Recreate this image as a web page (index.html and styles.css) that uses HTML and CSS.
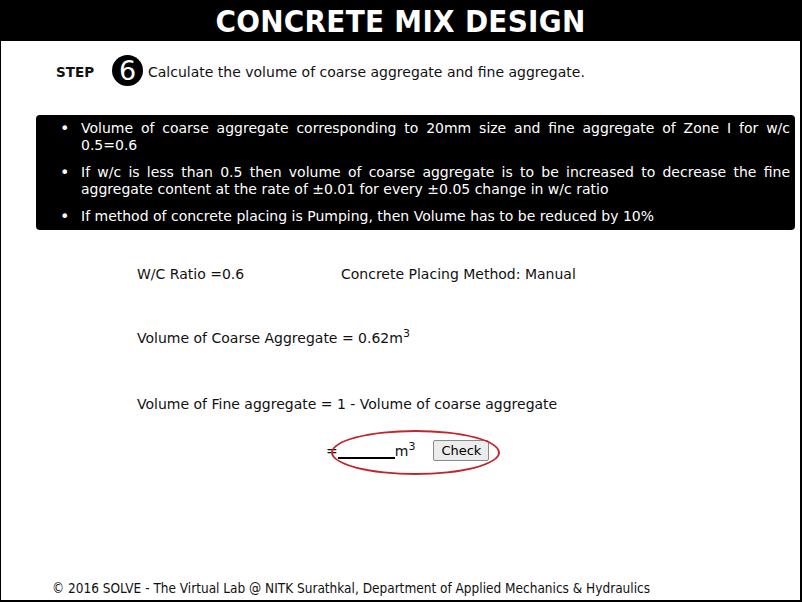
FILE: index.html
```html
<!DOCTYPE html>
<html>
<head>
<meta charset="utf-8">
<link rel="stylesheet" href="styles.css">
</head>
<body>
<div class="page">
  <header class="title">CONCRETE MIX DESIGN</header>
  <div class="step">
    <span class="step-label">STEP</span>
    <span class="step-num">6</span>
    <span class="step-text">Calculate the volume of coarse aggregate and fine aggregate.</span>
  </div>
  <div class="notes">
    <ul>
      <li>Volume of coarse aggregate corresponding to 20mm size and fine aggregate of Zone I for w/c 0.5=0.6</li>
      <li>If w/c is less than 0.5 then volume of coarse aggregate is to be increased to decrease the fine aggregate content at the rate of ±0.01 for every ±0.05 change in w/c ratio</li>
      <li>If method of concrete placing is Pumping, then Volume has to be reduced by 10%</li>
    </ul>
  </div>
  <div class="calc">
    <div class="row-ratio">
      <span class="ratio">W/C Ratio =0.6</span>
      <span>Concrete Placing Method: Manual</span>
    </div>
    <div class="coarse">Volume of Coarse Aggregate = 0.62m<sup>3</sup></div>
    <div class="fine">Volume of Fine aggregate = 1 - Volume of coarse aggregate</div>
    <div class="answer">
      <span class="eq">=</span><span class="blank"></span><span class="unit">m<sup>3</sup></span>
      <button class="check">Check</button>
      <span class="ring"></span>
    </div>
  </div>
  <footer class="foot">© 2016 SOLVE - The Virtual Lab @ NITK Surathkal, Department of Applied Mechanics &amp; Hydraulics</footer>
</div>
</body>
</html>
```
FILE: styles.css
```css
html, body { margin: 0; padding: 0; background: #fff; }
body { font-family: "DejaVu Sans", Verdana, sans-serif; color: #111; }
.page {
  width: 799px;
  height: 600px;
  border-left: 1px solid #000;
  border-right: 2px solid #000;
  border-bottom: 2px solid #000;
  display: flex;
  flex-direction: column;
  position: relative;
}
.title {
  background: #000;
  color: #fff;
  height: 41px;
  line-height: 42px;
  text-align: center;
  font-family: "DejaVu Sans Condensed", "DejaVu Sans", sans-serif;
  font-weight: bold;
  font-size: 31px;
  letter-spacing: 0.3px;
}
.step {
  display: flex;
  align-items: center;
  padding: 13px 0 0 55px;
  height: 32px;
}
.step-label {
  font-family: "DejaVu Sans", sans-serif;
  font-weight: bold;
  font-size: 13.5px;
  width: 56px;
  margin-top: 3px;
}
.step-num {
  width: 31px;
  height: 31px;
  border-radius: 50%;
  background: #000;
  color: #fff;
  font-size: 27px;
  line-height: 31px;
  text-align: center;
  margin-right: 5px;
}
.step-text { font-size: 14px; margin-top: 3px; }
.notes {
  margin: 29px 5px 0 35px;
  background: #000;
  color: #fff;
  border-radius: 4px;
  padding: 5px 5px 5px 0;
  font-size: 14px;
  line-height: 17px;
}
.notes ul { margin: 0; padding-left: 45px; list-style: none; }
.notes li { text-align: justify; margin: 0 0 10px; }
.notes li::before {
  content: "\2022";
  float: left;
  margin-left: -21px;
  font-size: 16px;
}
.notes li:last-child { margin-bottom: 0; }
.calc {
  padding-left: 136px;
  font-size: 14px;
}
.row-ratio { margin-top: 36px; display: flex; }
.ratio { width: 204px; }
sup { font-size: 11px; line-height: 0; vertical-align: 6px; }
.coarse { margin-top: 48px; }
.fine { margin-top: 50px; }
.answer {
  position: relative;
  margin: 25px 0 0 189px;
  display: flex;
  align-items: flex-end;
  height: 24px;
}
.eq { margin-bottom: 2px; }
.blank {
  width: 57px;
  border-bottom: 2px solid #000;
  margin-bottom: 2px;
}
.unit { margin-bottom: 2px; margin-right: 18px; }
.check {
  font-family: "DejaVu Sans", sans-serif;
  font-size: 13px;
  padding: 0 7px;
  height: 21px;
  background: #ececec;
  border: 1px solid #8a8a8a;
  border-radius: 2px;
  color: #000;
}
.ring {
  position: absolute;
  left: 5px;
  top: -7px;
  width: 165px;
  height: 41px;
  border: 2.5px solid #c0272d;
  border-radius: 50%;
}
.foot {
  margin-top: auto;
  padding: 0 0 4px 51px;
  font-family: "DejaVu Sans Condensed", sans-serif;
  font-size: 13.5px;
  color: #111;
}
```
